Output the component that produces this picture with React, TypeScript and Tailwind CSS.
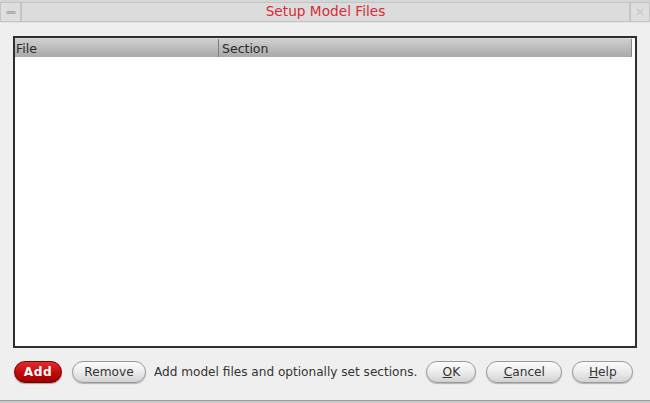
import React from 'react';

const font = { fontFamily: '"DejaVu Sans", "Noto Sans", sans-serif' };

function Btn({ children, className = '' }: { children: React.ReactNode; className?: string }) {
    return (
        <button
            className={`h-[22px] rounded-[11px] border border-[#9a9a9a] bg-gradient-to-b from-[#fbfbfb] via-[#ececec] to-[#d2d2d2] text-[12.2px] text-[#333] shadow-[0_1px_1px_rgba(0,0,0,0.25)] ${className}`}
        >
            {children}
        </button>
    );
}

export default function App() {
    return (
        <div className="w-[650px] h-[403px] bg-[#efefef] flex flex-col overflow-hidden" style={font}>
            {/* title bar */}
            <div className="h-[23px] border-t-2 border-[#d6d6d6] flex bg-[#e4e4e4]">
                <div className="w-[21px] h-[20px] border border-[#c4c4c4] bg-[#dedede] flex items-center justify-center">
                    <div className="w-[10px] h-[3px] rounded-sm bg-[#bdbdbd] border border-[#a9a9a9]" />
                </div>
                <div className="flex-1 h-[20px] border border-[#c4c4c4] bg-[#dcdcdc] flex items-center justify-center">
                    <span className="text-[13.7px] text-[#d92b35] leading-none">Setup Model Files</span>
                </div>
                <div className="w-[20px] h-[20px] border border-[#c4c4c4] bg-[#dedede] flex items-center justify-center text-[12px] text-[#c8c8c8] leading-none">
                    ✕
                </div>
            </div>

            {/* table */}
            <div className="mx-[13px] mt-[13px] h-[312px] border-2 border-[#2e2e2e] bg-white flex flex-col">
                <div className="mr-[3px] h-[19px] flex bg-gradient-to-b from-[#cfcfcf] to-[#a9a9a9] text-[12.5px] text-[#2a2a2a] leading-[19px] border-t border-[#d8d8d8]">
                    <div className="w-[204px] pl-[1px] border-r border-[#7e7e7e]">File</div>
                    <div className="flex-1 pl-[3px] border-r border-[#888]">Section</div>
                </div>
            </div>

            {/* bottom buttons */}
            <div className="flex items-center mt-[12px] h-[24px] pl-[14px]">
                <button className="w-[48px] h-[22px] rounded-[11px] border border-[#7a0000] bg-gradient-to-b from-[#e22b2b] via-[#c40a0a] to-[#9c0000] text-[12.2px] font-bold text-white tracking-[0.5px] shadow-[0_1px_1px_rgba(0,0,0,0.3)]">
                    Add
                </button>
                <Btn className="ml-[10px] w-[74px]">Remove</Btn>
                <span className="ml-[8px] text-[12.1px] text-[#333] whitespace-nowrap">Add model files and optionally set sections.</span>
                <Btn className="ml-[9px] w-[50px]">
                    <span className="underline">O</span>K
                </Btn>
                <Btn className="ml-[10px] w-[76px]">
                    <span className="underline">C</span>ancel
                </Btn>
                <Btn className="ml-[10px] w-[61px]">
                    <span className="underline">H</span>elp
                </Btn>
            </div>

            <div className="mt-auto h-[3px] border-t border-[#9c9c9c] bg-[#c8c8c8]" />
        </div>
    );
}
